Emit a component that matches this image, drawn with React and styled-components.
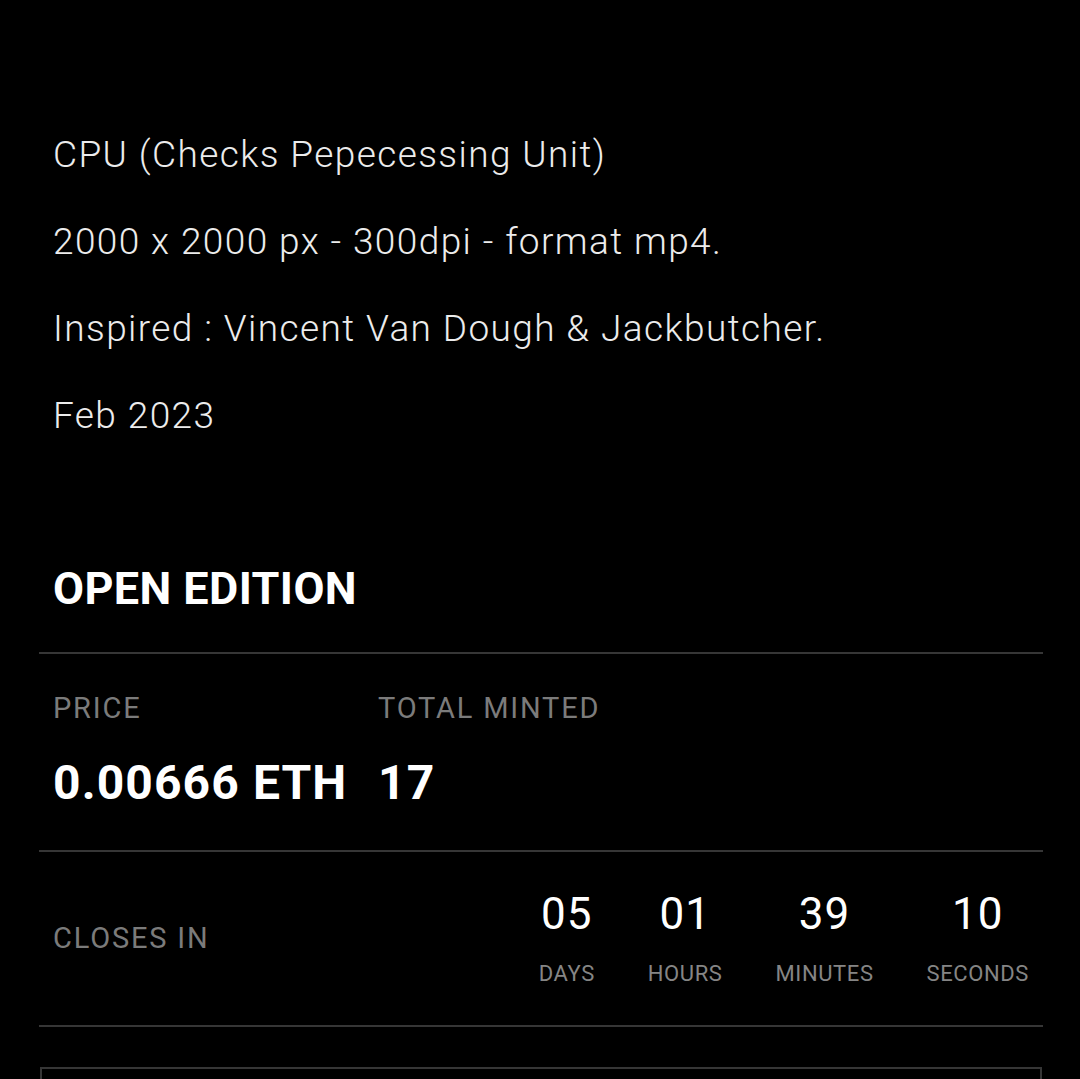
import React from "react";
import styled, { createGlobalStyle } from "styled-components";

const GlobalStyle = createGlobalStyle`
  html, body {
    margin: 0;
    padding: 0;
    background: #000;
  }
  body {
    font-family: Roboto, "Noto Sans", sans-serif;
    color: #fff;
  }
`;

const Page = styled.div`
  width: 1004px;
  margin-left: 39px;
  padding-top: 128px;
`;

const Description = styled.div`
  display: flex;
  flex-direction: column;
  gap: 33px;
  padding: 0 14px;
`;

const DescLine = styled.p`
  margin: 0;
  font-size: 37px;
  line-height: 54px;
  font-weight: 300;
  letter-spacing: 1.4px;
  color: #ececec;
`;

const Title = styled.h2`
  margin: 119px 0 36px;
  padding: 0 14px;
  font-size: 45px;
  line-height: 54px;
  font-weight: 700;
  letter-spacing: 0.4px;
`;

const Section = styled.div`
  display: flex;
  align-items: ${(p) => (p.$center ? "center" : "flex-start")};
  justify-content: space-between;
  padding: ${(p) => p.$pad || "36px 14px 38px"};
  border-top: ${(p) => (p.$top ? "2px solid #363636" : "none")};
  border-bottom: 2px solid #363636;
`;

const Stats = styled.div`
  display: flex;
`;

const Stat = styled.div`
  display: flex;
  flex-direction: column;
  gap: 28px;
  width: ${(p) => p.$width || "auto"};
`;

const Label = styled.span`
  font-size: 29px;
  line-height: 36px;
  font-weight: 400;
  letter-spacing: 1.8px;
  color: #7b7b7b;
  text-transform: uppercase;
`;

const Value = styled.span`
  font-size: 48px;
  line-height: 58px;
  font-weight: 700;
  letter-spacing: 1.1px;
  color: #fff;
`;

const Countdown = styled.div`
  display: flex;
  gap: 53px;
`;

const Unit = styled.div`
  display: flex;
  flex-direction: column;
  align-items: center;
  gap: 20px;
`;

const Number = styled.span`
  font-size: 44px;
  line-height: 52px;
  font-weight: 400;
  letter-spacing: 1px;
  color: #fff;
`;

const UnitLabel = styled.span`
  font-size: 22px;
  line-height: 28px;
  letter-spacing: 0.6px;
  color: #858585;
  text-transform: uppercase;
`;

const MintBox = styled.div`
  margin: 40px 1px 0;
  height: 90px;
  border: 2px solid #363636;
`;

const lines = [
  "CPU (Checks Pepecessing Unit)",
  "2000 x 2000 px - 300dpi - format mp4.",
  "Inspired : Vincent Van Dough & Jackbutcher.",
  "Feb 2023",
];

const timeLeft = [
  { value: "05", label: "Days" },
  { value: "01", label: "Hours" },
  { value: "39", label: "Minutes" },
  { value: "10", label: "Seconds" },
];

const App = () => {
  return (
    <>
      <GlobalStyle />
      <Page>
        <Description>
          {lines.map((line) => (
            <DescLine key={line}>{line}</DescLine>
          ))}
        </Description>

        <Title>OPEN EDITION</Title>

        <Section $top>
          <Stats>
            <Stat $width="325px">
              <Label>Price</Label>
              <Value>0.00666 ETH</Value>
            </Stat>
            <Stat>
              <Label>Total Minted</Label>
              <Value>17</Value>
            </Stat>
          </Stats>
        </Section>

        <Section $center $pad="36px 14px 37px">
          <Label>Closes in</Label>
          <Countdown>
            {timeLeft.map((t) => (
              <Unit key={t.label}>
                <Number>{t.value}</Number>
                <UnitLabel>{t.label}</UnitLabel>
              </Unit>
            ))}
          </Countdown>
        </Section>

        <MintBox />
      </Page>
    </>
  );
};

export default App;
